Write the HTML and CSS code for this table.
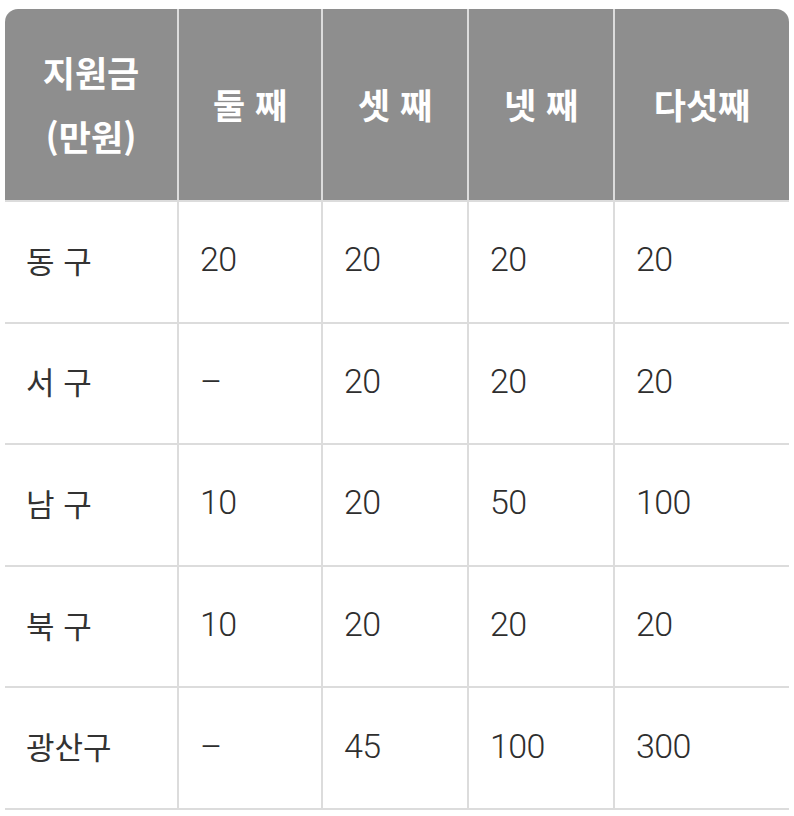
FILE: index.html
```html
<!DOCTYPE html>
<html lang="ko">
<head>
<meta charset="utf-8">
<link rel="stylesheet" href="styles.css">
</head>
<body>
<div class="wrap">
<table class="grid">
  <thead>
    <tr>
      <th class="c-wide first">지원금<br>(만원)</th>
      <th class="c-narrow">둘 째</th>
      <th class="c-mid">셋 째</th>
      <th class="c-mid">넷 째</th>
      <th class="c-wide last">다섯째</th>
    </tr>
  </thead>
  <tbody>
    <tr><td class="name">동 구</td><td>20</td><td>20</td><td>20</td><td class="last">20</td></tr>
    <tr><td class="name">서 구</td><td>–</td><td>20</td><td>20</td><td class="last">20</td></tr>
    <tr><td class="name">남 구</td><td>10</td><td>20</td><td>50</td><td class="last">100</td></tr>
    <tr><td class="name">북 구</td><td>10</td><td>20</td><td>20</td><td class="last">20</td></tr>
    <tr><td class="name">광산구</td><td>–</td><td>45</td><td>100</td><td class="last">300</td></tr>
  </tbody>
</table>
</div>
</body>
</html>
```

FILE: styles.css
```css
html, body {
  margin: 0;
  padding: 0;
  background: #ffffff;
}

.wrap {
  padding: 9px 5px 0 5px;
}

.grid {
  width: 784px;
  table-layout: fixed;
  border-collapse: separate;
  border-spacing: 0;
  font-family: Roboto, "Noto Sans CJK KR", sans-serif;
}

.grid th {
  box-sizing: border-box;
  height: 193px;
  background: #8e8e8e;
  color: #ffffff;
  font-size: 35px;
  font-weight: 700;
  line-height: 64px;
  text-align: center;
  vertical-align: middle;
  padding: 0 0 2px 0;
  border-right: 2px solid #dcdcdc;
  border-bottom: 2px solid #dcdcdc;
  font-family: "Noto Sans CJK KR", sans-serif;
}

.grid th.first { border-top-left-radius: 13px; }
.grid th.last { border-top-right-radius: 13px; border-right: none; }

.c-wide { width: 174px; }
.c-narrow { width: 144px; }
.c-mid { width: 146px; }

.grid td {
  box-sizing: border-box;
  height: 121.6px;
  padding: 0 0 5px 21px;
  font-size: 34px;
  font-weight: 300;
  letter-spacing: -0.6px;
  color: #2e2e2e;
  text-align: left;
  vertical-align: middle;
  border-right: 2px solid #dcdcdc;
  border-bottom: 2px solid #dcdcdc;
}

.grid td.name {
  font-size: 31px;
  font-weight: 400;
  letter-spacing: 0;
  color: #333333;
  font-family: "Noto Sans CJK KR", sans-serif;
}

.grid td.last { border-right: none; }
```
